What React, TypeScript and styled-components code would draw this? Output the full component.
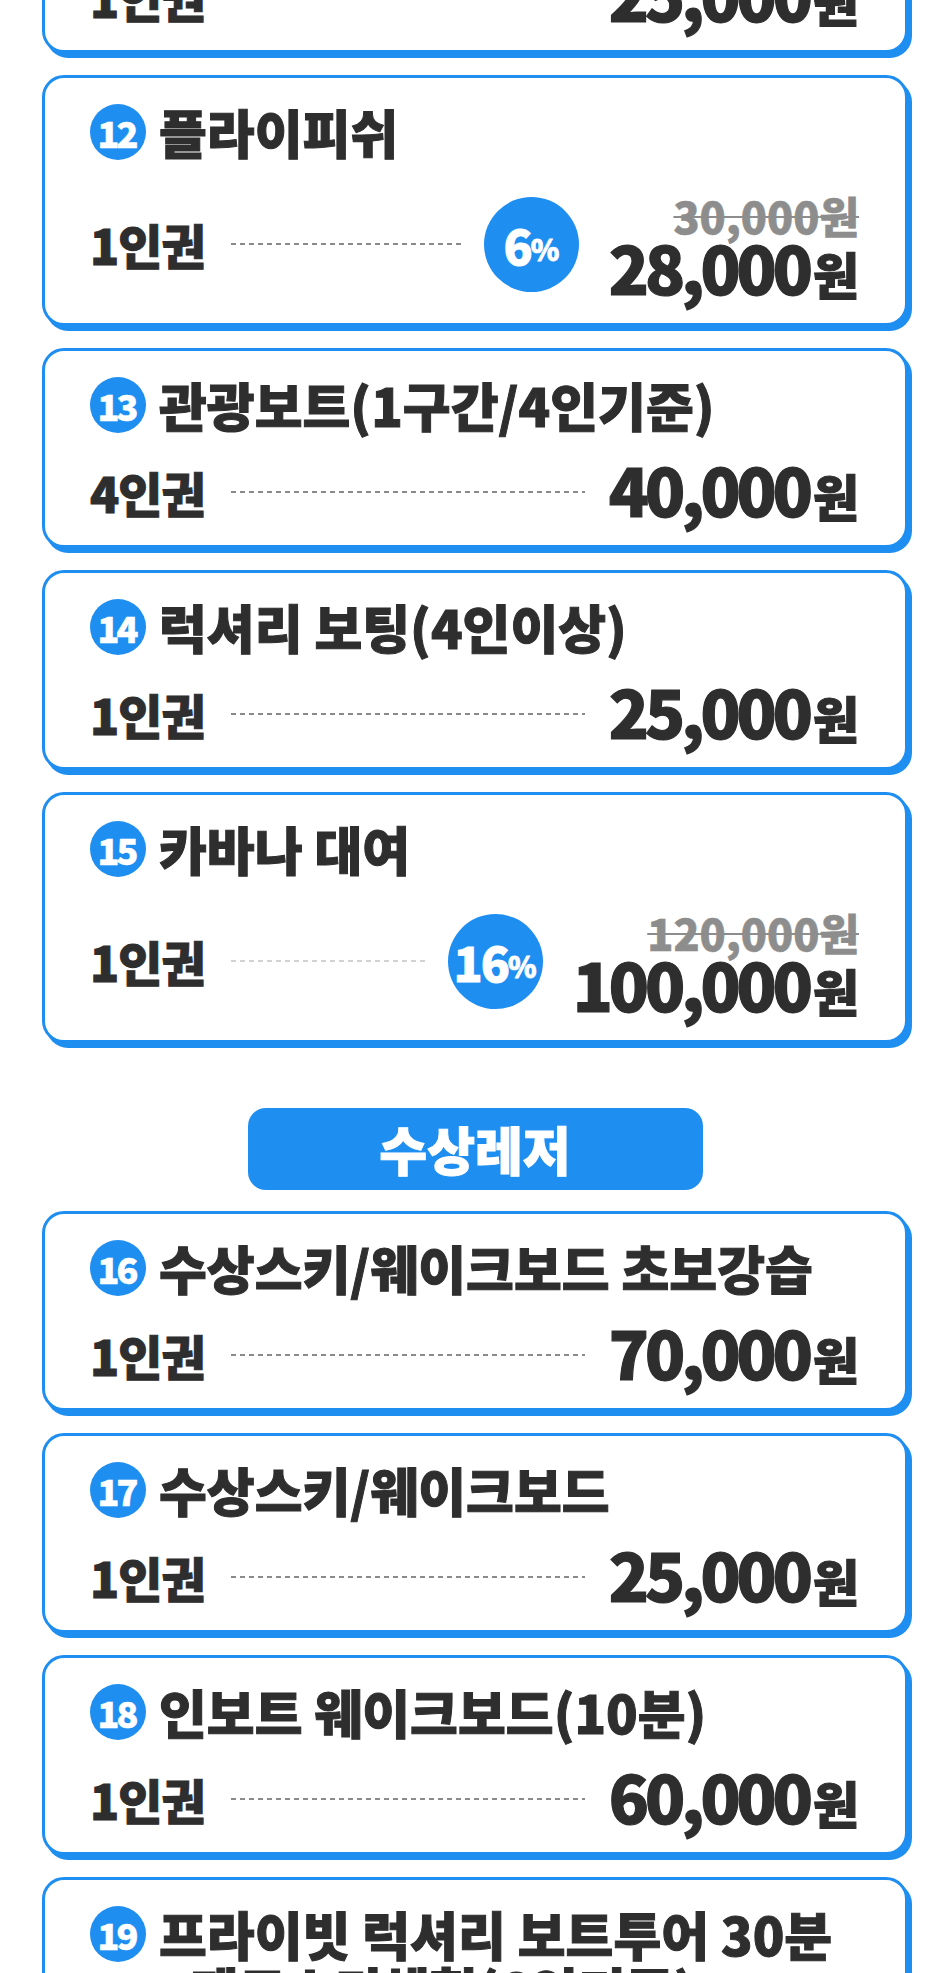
import styled, { createGlobalStyle, css } from 'styled-components';

const BLUE = '#1f8ef1';
const INK = '#2e2e2e';

const heavy = (w: number) => css`
  -webkit-text-stroke: ${w}px currentColor;
`;

const GlobalStyle = createGlobalStyle`
  html, body {
    margin: 0;
    padding: 0;
    background: #ffffff;
  }
  body {
    font-family: 'Noto Sans CJK KR', 'Noto Sans', sans-serif;
    overflow: hidden;
  }
`;

const Page = styled.main`
  width: 950px;
  height: 1973px;
  overflow: hidden;
  box-sizing: border-box;
`;

const List = styled.div`
  display: flex;
  flex-direction: column;
  gap: 22px;
  padding: 0 42px;
  margin-top: -67px;
`;

const Card = styled.section`
  background: #ffffff;
  border: 3px solid ${BLUE};
  border-radius: 22px;
  box-shadow: 4px 5px 0 ${BLUE};
  padding: 26px 46px 19px 45px;
`;

const TitleRow = styled.h3`
  display: flex;
  align-items: flex-start;
  gap: 13px;
  margin: 0 0 24px;
  font-size: 52px;
  font-weight: 900;
  line-height: 56px;
  color: ${INK};
  ${heavy(1)}
`;

const NumBadge = styled.span`
  flex: none;
  width: 56px;
  height: 56px;
  border-radius: 50%;
  background: ${BLUE};
  color: #ffffff;
  display: flex;
  align-items: center;
  justify-content: center;
  font-size: 36px;
  font-weight: 800;
  letter-spacing: -3px;
  padding-right: 3px;
  box-sizing: border-box;
  -webkit-text-stroke: 0.5px #ffffff;
`;

const Row = styled.div<{ $tall?: boolean }>`
  display: flex;
  align-items: center;
  min-height: ${(p) => (p.$tall ? 120 : 69)}px;
`;

const Label = styled.span`
  font-size: 48px;
  font-weight: 900;
  line-height: 1;
  letter-spacing: -1px;
  color: ${INK};
  ${heavy(1)}
`;

const Dots = styled.span<{ $faint?: boolean; $before: number }>`
  flex: 1;
  height: 2px;
  margin: 0 ${(p) => p.$before}px 0 26px;
  background-image: linear-gradient(
    to right,
    ${(p) => (p.$faint ? '#d2d2d2' : '#8a8a8a')} 55%,
    transparent 55%
  );
  background-size: 9px 2px;
  background-repeat: repeat-x;
`;

const Discount = styled.span`
  flex: none;
  width: 95px;
  height: 95px;
  margin-right: 30px;
  border-radius: 50%;
  background: ${BLUE};
  color: #ffffff;
  display: flex;
  align-items: center;
  justify-content: center;
  font-size: 48px;
  font-weight: 900;
  letter-spacing: -2px;
  ${heavy(0.8)}
`;

const Pct = styled.span`
  font-size: 29px;
  letter-spacing: 0;
  margin-top: 8px;
`;

const PriceStack = styled.div`
  display: flex;
  flex-direction: column;
  align-items: flex-end;
  padding-top: 6px;
`;

const OldPrice = styled.span`
  font-size: 43px;
  font-weight: 900;
  line-height: 44px;
  color: #8d8d8d;
  text-decoration: line-through;
  text-decoration-thickness: 2px;
  white-space: nowrap;
  ${heavy(0.6)}
`;

const Price = styled.span`
  font-size: 66px;
  font-weight: 900;
  line-height: 58px;
  letter-spacing: -4px;
  color: ${INK};
  white-space: nowrap;
  ${heavy(1.2)}
`;

const Won = styled.span`
  font-size: 50px;
  letter-spacing: 0;
  margin-left: 4px;
`;

const SectionLabel = styled.h2`
  align-self: center;
  width: 455px;
  height: 82px;
  margin: 43px 0 -1px;
  border-radius: 18px;
  background: ${BLUE};
  color: #ffffff;
  display: flex;
  align-items: center;
  justify-content: center;
  font-size: 52px;
  font-weight: 900;
  line-height: 1;
  ${heavy(1)}
`;

type Item = {
  no?: number;
  title?: string[];
  label?: string;
  price?: string;
  old?: string;
  discount?: string;
  faint?: boolean;
};

const tours: Item[] = [
  { label: '1인권', price: '25,000' },
  { no: 12, title: ['플라이피쉬'], label: '1인권', price: '28,000', old: '30,000', discount: '6' },
  { no: 13, title: ['관광보트(1구간/4인기준)'], label: '4인권', price: '40,000' },
  { no: 14, title: ['럭셔리 보팅(4인이상)'], label: '1인권', price: '25,000' },
  {
    no: 15,
    title: ['카바나 대여'],
    label: '1인권',
    price: '100,000',
    old: '120,000',
    discount: '16',
    faint: true,
  },
];

const water: Item[] = [
  { no: 16, title: ['수상스키/웨이크보드 초보강습'], label: '1인권', price: '70,000' },
  { no: 17, title: ['수상스키/웨이크보드'], label: '1인권', price: '25,000' },
  { no: 18, title: ['인보트 웨이크보드(10분)'], label: '1인권', price: '60,000' },
  { no: 19, title: ['프라이빗 럭셔리 보트투어 30분', '+제트스키체험(6인기준)'] },
];

const PriceCard = ({ item }: { item: Item }) => {
  const tall = !!item.discount;
  return (
    <Card>
      {item.title && (
        <TitleRow>
          <NumBadge>{item.no}</NumBadge>
          <span>
            {item.title.map((line, i) => (
              <span key={i}>
                {i > 0 && <br />}
                {line}
              </span>
            ))}
          </span>
        </TitleRow>
      )}
      {item.price && (
        <Row $tall={tall}>
          <Label>{item.label}</Label>
          <Dots $faint={item.faint} $before={tall ? 20 : 24} />
          {item.discount && (
            <Discount>
              {item.discount}
              <Pct>%</Pct>
            </Discount>
          )}
          {item.old ? (
            <PriceStack>
              <OldPrice>{item.old}원</OldPrice>
              <Price>
                {item.price}
                <Won>원</Won>
              </Price>
            </PriceStack>
          ) : (
            <Price>
              {item.price}
              <Won>원</Won>
            </Price>
          )}
        </Row>
      )}
    </Card>
  );
};

export default function App() {
  return (
    <Page>
      <GlobalStyle />
      <List>
        {tours.map((item, i) => (
          <PriceCard key={`t${i}`} item={item} />
        ))}
        <SectionLabel>수상레저</SectionLabel>
        {water.map((item, i) => (
          <PriceCard key={`w${i}`} item={item} />
        ))}
      </List>
    </Page>
  );
}
